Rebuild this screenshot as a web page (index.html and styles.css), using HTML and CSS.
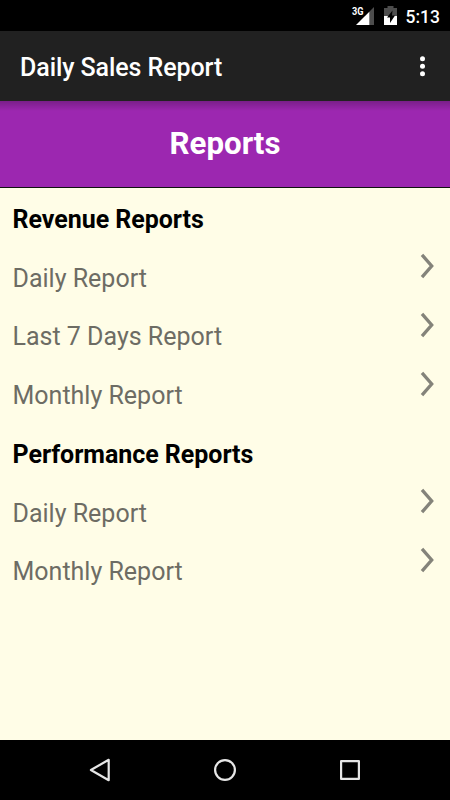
FILE: index.html
```html
<!DOCTYPE html>
<html lang="en">
<head>
<meta charset="UTF-8">
<meta name="viewport" content="width=device-width, initial-scale=1.0">
<title>Daily Sales Report</title>
<link rel="stylesheet" href="styles.css">
</head>
<body>
<div class="screen">
  <div class="status-bar">
    <svg class="signal" width="24" height="20" viewBox="0 0 24 20">
      <text class="network" x="2" y="9" textLength="11.500" lengthAdjust="spacingAndGlyphs">3G</text>
      <path d="M24 1v18h-5V6z" fill="#4d4d4d"/>
      <path d="M19.300 5.700V19H6z" fill="#fff"/>
    </svg>
    <svg class="battery" width="13" height="20" viewBox="0 0 13 20">
      <path d="M0 2h3.500V0h6v2H13v8H0z" fill="#4d4d4d"/>
      <path d="M0 10h13v9H0z" fill="#fff"/>
      <path d="M8.500 4.500L3 11.500h3V17l5-7.500H8z" fill="#000"/>
    </svg>
    <span class="clock">5:13</span>
  </div>

  <div class="toolbar">
    <h1 class="app-title">Daily Sales Report</h1>
    <svg width="6" height="22" viewBox="0 0 6 22" fill="#fff">
      <circle cx="2.500" cy="2.700" r="2.500"/>
      <circle cx="2.500" cy="10.200" r="2.500"/>
      <circle cx="2.500" cy="17.700" r="2.500"/>
    </svg>
  </div>

  <h2 class="banner">Reports</h2>

  <div class="list">
    <h3 class="row heading">Revenue Reports</h3>
    <div class="row">Daily Report
      <svg class="arrow" width="14" height="26" viewBox="0 0 14 26"><path d="M2 1.800L11.700 13L2 24.200"/></svg>
    </div>
    <div class="row">Last 7 Days Report
      <svg class="arrow" width="14" height="26" viewBox="0 0 14 26"><path d="M2 1.800L11.700 13L2 24.200"/></svg>
    </div>
    <div class="row">Monthly Report
      <svg class="arrow" width="14" height="26" viewBox="0 0 14 26"><path d="M2 1.800L11.700 13L2 24.200"/></svg>
    </div>
    <h3 class="row heading">Performance Reports</h3>
    <div class="row">Daily Report
      <svg class="arrow" width="14" height="26" viewBox="0 0 14 26"><path d="M2 1.800L11.700 13L2 24.200"/></svg>
    </div>
    <div class="row">Monthly Report
      <svg class="arrow" width="14" height="26" viewBox="0 0 14 26"><path d="M2 1.800L11.700 13L2 24.200"/></svg>
    </div>
  </div>

  <div class="nav-bar">
    <svg width="24" height="24" viewBox="0 0 24 24"><path d="M20.700 1.800V22.200L2.900 12z"/></svg>
    <svg width="24" height="24" viewBox="0 0 24 24"><circle cx="12" cy="12" r="9.900"/></svg>
    <svg width="24" height="24" viewBox="0 0 24 24"><rect x="3.100" y="3.100" width="17.800" height="17.800"/></svg>
  </div>
</div>
</body>
</html>
```
FILE: styles.css
```css
body {
    margin: 0;
    font-family: Roboto, sans-serif;
}
.screen {
    display: flex;
    flex-direction: column;
    height: 800px;
    overflow: hidden;
    background-color: #fffde7;
}
.status-bar {
    display: flex;
    align-items: center;
    height: 31px;
    box-sizing: border-box;
    padding: 1px 10px 0 0;
    justify-content: flex-end;
    background-color: #000;
    color: #fff;
}
.signal {
    margin-right: 10px;
}
.network {
    font-size: 10px;
    font-weight: 700;
    fill: #fff;
}
.battery {
    margin-right: 9px;
}
.clock {
    padding-top: 1px;
    font-size: 17.500px;
    font-weight: 500;
}
.toolbar {
    display: flex;
    align-items: center;
    justify-content: space-between;
    height: 70px;
    box-sizing: border-box;
    padding: 2px 24.500px 0 20px;
    background-color: #212121;
    color: #fff;
}
.app-title {
    margin: 0;
    padding-top: 1px;
    font-size: 25px;
    font-weight: 500;
    letter-spacing: -0.080px;
}
.banner {
    margin: 0;
    height: 86px;
    line-height: 85px;
    text-align: center;
    font-size: 31.250px;
    font-weight: 700;
    color: #fff;
    background: linear-gradient(rgba(0, 0, 0, 0.220), rgba(0, 0, 0, 0) 10px) #9c27b0;
    border-bottom: 1px solid #111;
}
.list {
    flex: 1;
    padding-top: 2px;
}
.row {
    display: flex;
    align-items: center;
    justify-content: space-between;
    height: 58.750px;
    padding: 0 16px 0 12.500px;
    font-size: 25px;
    color: #6d6c64;
}
.heading {
    margin: 0;
    font-weight: 700;
    letter-spacing: -0.040px;
    color: #000;
}
.arrow {
    margin-bottom: 24px;
    fill: none;
    stroke: #84837a;
    stroke-width: 3.300;
}
.nav-bar {
    display: flex;
    align-items: center;
    justify-content: space-between;
    height: 60px;
    padding: 0 88px;
    background-color: #000;
}
.nav-bar svg {
    fill: none;
    stroke: #e6e6e6;
    stroke-width: 2.200;
    stroke-linejoin: round;
}
```
